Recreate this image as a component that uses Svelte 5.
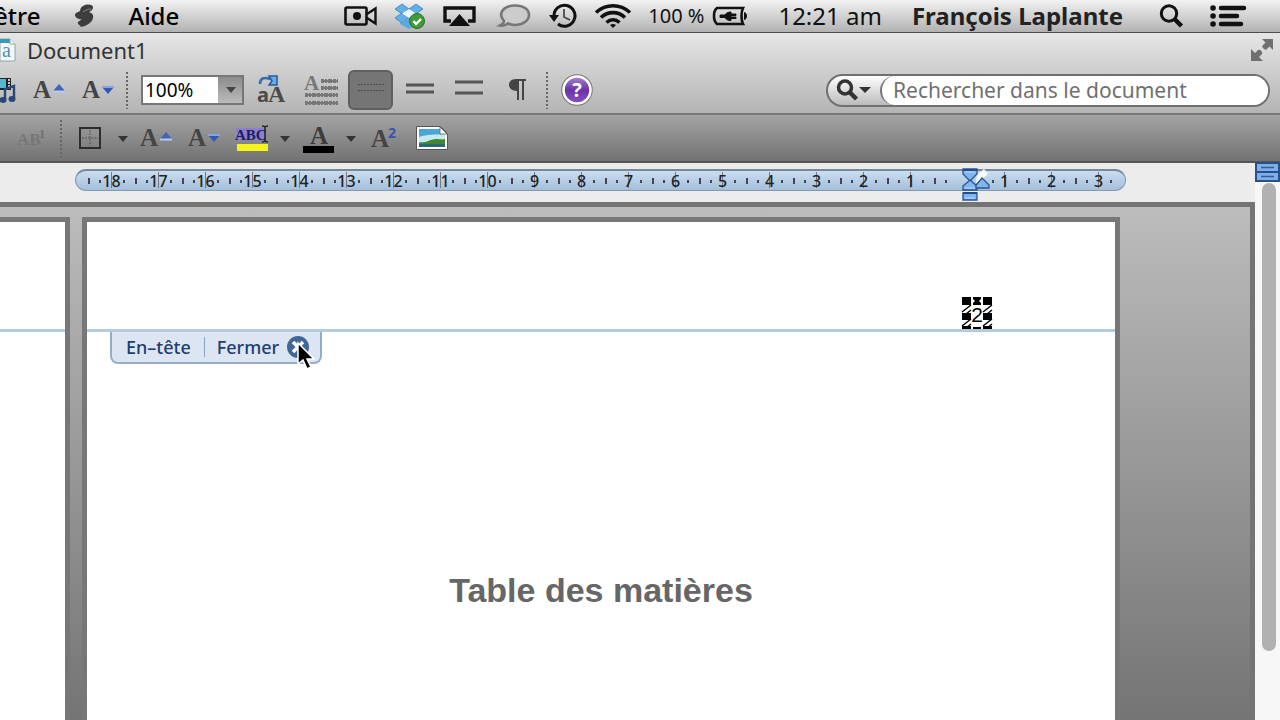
<script lang="ts">
  const marks = [18, 17, 16, 15, 14, 13, 12, 11, 10, 9, 8, 7, 6, 5, 4, 3, 2, 1, 0, 1, 2, 3];

  let zoom = $state('100%');
  let search = $state('');
  let spacing = $state(1);
  let headerOpen = $state(true);
</script>

{#snippet letterSize(grow: boolean)}
  <svg width="32" height="32" viewBox="0 -4 32 32">
    <text class="serif" x="0" y="20" font-size="25" font-weight="bold" fill="#444">A</text>
    {#if grow}
      <path d="M20 13 26 6l6 7z" fill="#4363b4" /><path d="M20 13.500h12" stroke="#b9cbed" stroke-width="2" />
    {:else}
      <path d="M20 9h12l-6 7z" fill="#3558b2" /><path d="M20 9h12" stroke="#87a5de" stroke-width="2" />
    {/if}
  </svg>
{/snippet}

{#snippet caret()}
  <svg width="10" height="7" viewBox="0 0 10 7"><path d="M0 1h10L5 7z" fill="#333" /></svg>
{/snippet}

<div class="screen">
  <header class="menubar">
    <nav>
      <a class="cut" href="#fenetre">être</a>
      <button class="script" aria-label="Scripts">
        <svg width="20" height="24" viewBox="0 0 20 24">
          <path d="M11 1c4-1 8 0 8 2 0 3-2 4-4 5 3 1 5 3 4 6-1 5-7 8-12 9-1-2-4-3-3-5 1-1 3-2 4-3-4 1-7-2-7-4 0-2 3-3 5-4 0-3 2-5 5-6z" fill="#3d3d3d" />
          <path d="M9 8c3-2 5-3 8-3" stroke="#888" fill="none" />
        </svg>
      </button>
      <a href="#aide">Aide</a>
    </nav>
    <div class="status">
      <svg width="33" height="22" viewBox="0 0 33 22">
        <rect x="1.500" y="2.500" width="21" height="17" rx="1.500" fill="none" stroke="#111" stroke-width="2.600" />
        <circle cx="13" cy="11" r="4" fill="#111" />
        <path d="M23 9 31.500 3.500v15L23 13" fill="none" stroke="#111" stroke-width="2.400" />
      </svg>
      <svg width="30" height="26" viewBox="0 0 30 26">
        <path d="M7 1 14 6 7 11 0 6zM21 1l7 5-7 5-7-5zM7 10l7 5-7 5-7-5zM21 10l7 5-7 5-7-5z" fill="#62b0e8" stroke="#2c76b4" stroke-width=".7" />
        <path d="M14 6 21 10.500 14 15 7 10.500z" fill="#eaf4fc" />
        <path d="M5 19v2l9 5 7-4-7-6-7 4z" fill="#5ba9e1" />
        <circle cx="22" cy="18" r="7.500" fill="#3e9c38" stroke="#26722a" />
        <path d="m18.500 18 2.500 3 5-5" fill="none" stroke="#fff" stroke-width="2.200" />
      </svg>
      <svg width="36" height="22" viewBox="0 0 36 22">
        <path d="M8 16H2V3h29v13h-6" fill="none" stroke="#111" stroke-width="3.400" />
        <path d="M16.500 9 27 21H6z" fill="#111" />
      </svg>
      <svg width="34" height="24" viewBox="0 0 34 24">
        <path d="M7 17C0 9 7 1.500 18 1.500c9 0 14 4 14 9.500s-6 10-14 10c-3 0-5-.500-7-1.500-2 1.500-5 2.500-8 2 2-1 4-2 4-4.500z" fill="#ccc" stroke="#777" stroke-width="2.600" />
      </svg>
      <svg width="29" height="24" viewBox="0 0 29 24">
        <path d="M5 12A10.500 10.500 0 1 1 9 20" fill="none" stroke="#111" stroke-width="3" />
        <path d="M0 11h10l-5 7z" fill="#111" />
        <path d="M15 5v8l6 3" fill="none" stroke="#444" stroke-width="1.700" />
      </svg>
      <svg width="34" height="24" viewBox="1 0 34 24">
        <g fill="none" stroke="#111" stroke-width="3.600">
          <path d="M1 8.500C11-.5 25-.5 35 8.500" /><path d="M6 13.500c7-6.500 17-6.500 24 0" /><path d="M11.500 18.500c4-3.500 9-3.500 13 0" />
        </g>
        <path d="m18 24-3-3c2-1.500 4-1.500 6 0z" fill="#111" />
      </svg>
      <div class="battery">
        <span class="percent">100 %</span>
        <svg width="36" height="20" viewBox="0 0 36 20">
          <path d="M5 2h26c-2 4-2 12 0 16H5C1 15 1 5 5 2z" fill="none" stroke="#111" stroke-width="2.600" />
          <path d="M32 6c4 1 4 7 0 8z" fill="#111" />
          <path d="M8 9h5c1-2 3-3 6-3v2h5v1.500h-5v1.500h5v1.500h-5v2c-3 0-5-1-6-3H8z" fill="#111" stroke="#111" />
        </svg>
      </div>
      <time>12:21 am</time>
      <strong>François Laplante</strong>
      <button aria-label="Spotlight">
        <svg width="25" height="24" viewBox="0 0 25 24">
          <circle cx="10" cy="9.500" r="7.700" fill="none" stroke="#111" stroke-width="3" /><path d="m15.500 15 7 7" stroke="#111" stroke-width="4.500" />
        </svg>
      </button>
      <button aria-label="Notifications">
        <svg width="36" height="22" viewBox="0 0 36 22">
          <path d="M11 3h23M11 11h16M11 19h20" stroke="#111" stroke-width="4.500" stroke-linecap="round" />
          <path d="M3 3h.1M3 11h.1M3 19h.1" stroke="#111" stroke-width="5.500" stroke-linecap="round" />
        </svg>
      </button>
    </div>
  </header>

  <section class="window-top">
    <div class="titlebar">
      <svg width="16" height="24" viewBox="0 0 16 24">
        <path d="M0 1h10l5 5v17H0z" fill="#f4f8fa" stroke="#8fa4ac" />
        <path d="M0 1h10l2 4H0z" fill="#3a9ab4" />
        <path d="M10 1v5h5" fill="#fff" stroke="#8fa4ac" />
        <text class="serif" x="2" y="19" font-size="20" fill="#4b93b4">a</text>
      </svg>
      <h1>Document1</h1>
      <button class="fullscreen" aria-label="Plein écran">
        <svg width="24" height="24" viewBox="0 0 24 24">
          <path d="M12 1h11v11l-3.500-3.500-3 3c-2 1-5-2-4-4l3-3z" fill="#707070" /><path d="M1 11v12h12l-4-4 3-3c1-2-2-5-4-4l-3 3z" fill="#707070" />
        </svg>
      </button>
    </div>

    <div class="toolbar">
      <button class="media" aria-label="Médias">
        <svg width="16" height="28" viewBox="0 0 16 28">
          <path d="M0 2h11v12H0z" fill="#222" /><path d="M0 3h6v9H0z" fill="#57b7d3" />
          <path d="M8 4h2M8 7h2M8 10h2" stroke="#fff" stroke-width="1.500" />
          <path d="M5 24V13l9-3v13" fill="none" stroke="#294777" stroke-width="2.400" />
          <ellipse cx="3" cy="24" rx="3.500" ry="3" fill="#294777" /><ellipse cx="12" cy="23" rx="3.500" ry="3" fill="#294777" />
        </svg>
      </button>
      <button aria-label="Agrandir la police">{@render letterSize(true)}</button>
      <button aria-label="Réduire la police">{@render letterSize(false)}</button>
      <i class="sep"></i>
      <span class="zoom">
        <select aria-label="Zoom" bind:value={zoom}>
          <option>100%</option>
          <option>150%</option>
          <option>200%</option>
        </select>
      </span>
      <button aria-label="Changer la casse">
        <svg width="29" height="34" viewBox="1 -2 29 34">
          <path d="M3 9C3 3 7 2 13 4" fill="none" stroke="#356fb1" stroke-width="2.600" /><path d="M12 1h8v9h-8l3-4z" fill="#6aaee6" stroke="#245a9b" stroke-width="1.500" />
          <text class="sans" x="0" y="27" font-size="20" font-weight="bold" fill="#4a4a4a">a</text>
          <text class="serif" x="11" y="27" font-size="24" font-weight="bold" fill="#4a4a4a">A</text>
        </svg>
      </button>
      <button aria-label="Styles de texte">
        <svg width="36" height="36" viewBox="0 -4 36 36">
          <text class="serif" x="0" y="14" font-size="21" font-weight="bold" fill="#777">A</text>
          <path d="M17 5h17M17 12h17M1 19h33M1 27h33" stroke="#777" stroke-width="4" stroke-dasharray="3 1 2 1 4 1" />
          <path d="M17 5h17M17 12h17M1 19h33M1 27h33" stroke="#777" stroke-width="2" />
        </svg>
      </button>
      {#each [[13, 19], [14, 21], [11, 22]] as [top, bottom], i}
        <button class="spacing" class:active={spacing === i + 1} aria-label="Interligne {i + 1}" onclick={() => (spacing = i + 1)}>
          <svg width="28" height="38" viewBox="0 0 28 38">
            {#if i === 0}
              <path d="M1 {top}.5h26M1 {bottom}.5h26" stroke="#4d4d4d" stroke-dasharray="2 1" />
            {:else}
              <path d="M0 {top}h28M0 {bottom}h28" stroke="#555" stroke-width="3" />
            {/if}
          </svg>
        </button>
      {/each}
      <button aria-label="Afficher les marques">
        <svg width="18" height="24" viewBox="0 0 18 24">
          <path d="M17 1H7C2 1 0 4 0 7s3 6 8 6v9h2V3h3v19h2V3h2z" fill="#444" />
        </svg>
      </button>
      <i class="sep"></i>
      <button aria-label="Aide">
        <svg width="32" height="32" viewBox="0 0 32 32">
          <defs>
            <linearGradient id="violet" x2="0" y2="1"><stop stop-color="#ad88d6" /><stop offset=".5" stop-color="#6b31a6" /><stop offset="1" stop-color="#8c52c8" /></linearGradient>
          </defs>
          <circle cx="16" cy="16" r="14" fill="url(#violet)" stroke="#777" stroke-width="3.500" /><circle cx="16" cy="16" r="13.500" fill="none" stroke="#fff" stroke-width="2.500" />
          <text class="sans" x="16" y="23" text-anchor="middle" font-size="20" font-weight="bold" fill="#fff">?</text>
        </svg>
      </button>
      <label class="search">
        <svg width="36" height="22" viewBox="0 0 36 22">
          <circle cx="9" cy="8.500" r="6.500" fill="none" stroke="#333" stroke-width="3.500" /><path d="m13.500 13 7 7" stroke="#333" stroke-width="4.500" />
          <path d="M23 8h12l-6 6z" fill="#333" />
        </svg>
        <input type="text" aria-label="Recherche" placeholder="Rechercher dans le document" bind:value={search} />
      </label>
    </div>
  </section>

  <section class="formatbar">
    <button class="first" aria-label="Note">
      <svg width="30" height="24" viewBox="0 -2 30 24">
        <text class="serif" x="0" y="17" font-size="17" font-weight="bold" fill="#777">AB</text><text class="serif" x="22" y="10" font-size="12" font-weight="bold" fill="#707070">1</text>
      </svg>
    </button>
    <i class="sep"></i>
    <button aria-label="Bordures">
      <svg width="22" height="22" viewBox="0 0 22 22">
        <rect x="1" y="1" width="20" height="20" fill="none" stroke="#2d2d2d" stroke-width="2" />
        <path d="M11 3v16M3 11h16" stroke="#555" stroke-dasharray="2 1" />
      </svg>
    </button>
    <button class="drop" aria-label="Options de bordure">{@render caret()}</button>
    <button aria-label="Police plus grande">{@render letterSize(true)}</button>
    <button aria-label="Police plus petite">{@render letterSize(false)}</button>
    <button aria-label="Surlignage">
      <svg width="34" height="28" viewBox="0 0 34 28">
        <path d="M1 4h30v12H1z" fill="#8b80d0" />
        <text class="serif" x="0" y="16" font-size="15" font-weight="bold" fill="#20205c">ABC</text>
        <path d="M27 2c2 0 3 0 3 2v12c0 2-1 2-3 2m6-16c-2 0-3 0-3 2m0 12c0 2 1 2 3 2" fill="none" stroke="#222" stroke-width="1.500" />
        <path d="M2 20h31v7H2z" fill="#f5f41c" />
      </svg>
    </button>
    <button class="drop" aria-label="Couleur du surlignage">{@render caret()}</button>
    <button aria-label="Couleur de police">
      <svg width="31" height="32" viewBox="0 -5 31 32">
        <text class="serif" x="7" y="17" font-size="25" font-weight="bold" fill="#3c3c3c">A</text><path d="M0 19h31v7H0z" fill="#000" />
      </svg>
    </button>
    <button class="drop" aria-label="Choix de couleur">{@render caret()}</button>
    <button aria-label="Exposant">
      <svg width="26" height="32" viewBox="0 -4 26 32">
        <text class="serif" x="0" y="21" font-size="25" font-weight="bold" fill="#444">A</text><text class="sans" x="17" y="12" font-size="14" font-weight="bold" fill="#3653b0">2</text>
      </svg>
    </button>
    <button aria-label="Image">
      <svg width="32" height="24" viewBox="0 0 32 24">
        <path d="M.500.500h24l7 7v16H.500z" fill="#fff" stroke="#555" />
        <path d="M3 3h21l5 6v12H3z" fill="#4ca5d8" /><path d="M3 11c8-3 17-2 26-3v8H3z" fill="#c6e9ef" />
        <path d="M3 17c8 0 11-4 17-4 4 0 6 1 9 0v5H3z" fill="#428534" /><path d="M3 18h26v3H3z" fill="#296b74" />
        <path d="M24 1v7h7z" fill="#fff" stroke="#777" />
      </svg>
    </button>
  </section>

  <main>
    <div class="canvas">
      <div class="ruler-row">
        <div class="ruler">
          {#each marks as mark}
            <span class:zero={mark === 0}>{mark || ''}</span>
          {/each}
          <svg class="indent" width="28" height="36" viewBox="0 0 28 36">
            <path d="m15 7 7-6 4 5-12 10z" fill="#fff" />
            <g stroke="#28558f" stroke-width="1.300" fill="#80b5f0">
              <path d="M1 1h14v5L8 13 1 6z" /><path d="m8 12 7 6v4H1v-4z" /><path d="M1 25h14v7H1z" /><path d="m20 10 7 7v3H14v-3z" />
            </g>
            <path d="M1 2h14M1 25h14" stroke="#254e88" stroke-width="2" /><path d="M3 4h10M3 20h10M3 30h10" stroke="#b9dbff" />
          </svg>
        </div>
      </div>

      <div class="workspace">
        <article class="page previous"><div class="page-header"></div></article>
        <article class="page current">
          <div class="page-header">
            <svg class="field" width="30" height="32" viewBox="0 0 30 32">
              <path d="M0 15 9 8M4 17l5-4M21 15l9-7M25 17l5-4M0 29l9-7M4 31l5-4M21 29l9-7M25 31l5-4" stroke="#000" stroke-width="1.500" />
              <path d="M0 0h9v8H0zM11 0h8v2l-2 2 2 2v2h-8V6l2-2-2-2zM21 0h9v8h-9zM0 16h9v7H0zM21 16h9v7h-9zM0 29h9v3H0zM11 30h8v2h-8zM21 29h9v3h-9z" />
              <text class="arial" x="15" y="25" text-anchor="middle" font-size="21">2</text>
            </svg>
          </div>
          {#if headerOpen}
            <div class="header-tab">
              <span>En–tête</span>
              <button onclick={() => (headerOpen = false)}>
                Fermer
                <svg width="22" height="22" viewBox="0 0 22 22">
                  <circle cx="11" cy="11" r="11" fill="#416798" /><path d="m6 6 10 10M16 6 6 16" stroke="#fff" stroke-width="3.500" />
                </svg>
              </button>
              <svg class="pointer" width="18" height="28" viewBox="0 0 18 28">
                <path d="M1 1v21l5-4 4 9 4-2-4-8h7z" fill="#000" stroke="#fff" stroke-width="1.500" />
              </svg>
            </div>
          {/if}
          <h2>Table des matières</h2>
        </article>
      </div>
    </div>
    <aside class="scrollbar">
      <svg width="25" height="19" viewBox="0 0 25 19">
        <path d="M1 0h23v18H1z" fill="#7faee8" stroke="#264f8c" stroke-width="2" /><path d="M2 9h21" stroke="#264f8c" stroke-width="2" />
        <path d="M6 4.500h13M6 13.500h13" stroke="#315e9c" stroke-width="1.500" />
      </svg>
      <div class="thumb"></div>
    </aside>
  </main>
</div>

<style>
  :global(body) { margin: 0; overflow: hidden; }
  .screen { height: 100vh; display: flex; flex-direction: column; overflow: hidden; font-family: "Noto Sans", sans-serif; color: #111; }
  .screen * { box-sizing: border-box; }
  svg { display: block; flex: none; overflow: visible; }
  button { border: 0; padding: 0; background: none; font: inherit; color: inherit; }
  .serif { font-family: "Liberation Serif", serif; }
  .sans { font-family: "Noto Sans", sans-serif; }
  .arial { font-family: "Liberation Sans", sans-serif; }

  .menubar { flex: none; height: 33px; display: flex; justify-content: space-between; align-items: center; padding-right: 34px; border-bottom: 1px solid #4c4c4c; background: linear-gradient(#f2f2f2, #b2b2b2); font-size: 24px; line-height: 32px; white-space: nowrap; }
  nav, .status, .battery { display: flex; align-items: center; }
  nav { gap: 34px; font-weight: 500; }
  nav a { color: #000; text-decoration: none; }
  .cut { margin-left: -6px; }
  .status { gap: 18px; }
  .battery { gap: 8px; }
  .percent { font-size: 20px; }
  time { margin: 0 12px; }
  strong { margin-right: 18px; color: #222; }
  .status button + button { margin-left: 8px; }

  .window-top { flex: none; height: 82px; border-bottom: 2px solid #777; background: linear-gradient(#e6e6e6, #b4b4b4); }
  .titlebar { height: 34px; display: flex; align-items: center; gap: 11px; padding-right: 6px; }
  h1 { margin: 0; font-size: 22px; line-height: 34px; font-weight: 400; color: #333; }
  .fullscreen { margin-left: auto; }
  .toolbar { height: 46px; display: flex; align-items: center; padding-right: 10px; }
  .toolbar button { width: 49px; height: 40px; flex: none; display: flex; align-items: center; justify-content: center; }
  .toolbar .media { width: 24px; justify-content: flex-start; }
  .toolbar .spacing.active { width: 45px; margin: 0 2px; border: 2px solid #5f5f5f; border-radius: 6px; background: #757575; }
  .sep { flex: none; width: 10px; height: 38px; background: radial-gradient(circle, #666 1px, transparent 1px) center top / 4px 4px repeat-y; }
  .zoom { position: relative; flex: none; margin: 0 4px 0 9px; }
  .zoom::after { content: ''; position: absolute; right: 8px; top: 12px; border: 5px solid transparent; border-top: 6px solid #444; border-bottom: 0; pointer-events: none; }
  select { display: block; width: 103px; height: 30px; padding: 0 2px; border: 2px solid #777; border-radius: 0; appearance: none; background: linear-gradient(#8c8c8c, #bbb) right / 24px 100% no-repeat, #fff; font: 19px/26px "Noto Sans", sans-serif; color: #000; }
  .search { width: 444px; height: 33px; margin-left: auto; display: flex; align-items: center; padding-left: 8px; border: 2px solid #707070; border-radius: 17px; background: linear-gradient(#fff, #bbb); }
  .search input { flex: 1; min-width: 0; height: 29px; margin-left: 8px; padding: 0 11px; border: 0; border-left: 2px solid #777; border-radius: 15px; background: #fff; font: 21px/28px "Noto Sans", sans-serif; }
  .search input::placeholder { color: #707070; opacity: 1; }

  .formatbar { flex: none; height: 48px; display: flex; align-items: center; padding-left: 8px; border-bottom: 2px solid #555; background: linear-gradient(#a4a4a4, #727272); }
  .formatbar button { width: 48px; height: 40px; flex: none; display: flex; align-items: center; justify-content: center; }
  .formatbar .drop { width: 18px; }

  main { flex: 1; min-height: 0; display: flex; }
  .canvas { flex: 1; min-width: 0; display: flex; flex-direction: column; }
  .ruler-row { flex: none; height: 39px; padding: 6px 0 0 75px; background: #ececec; }
  .ruler { position: relative; width: 1051px; height: 22px; display: flex; padding-left: 12px; border: 1px solid #8299b3; border-top: 2px solid #77889b; border-radius: 11px; background: linear-gradient(#c9def0, #a5bfdb); }
  .ruler span { width: 47px; flex: none; text-align: center; font-size: 16px; line-height: 20px; font-weight: 500; color: #222; background: linear-gradient(#445, #445) 0 7px / 2px 6px no-repeat, linear-gradient(#445, #445) 11px 9px / 2px 3px no-repeat, linear-gradient(#445, #445) 35px 9px / 2px 3px no-repeat, linear-gradient(#778, #778) 23px 1px / 1px 16px no-repeat; }
  .ruler .zero { background: linear-gradient(#445, #445) 0 7px / 2px 6px no-repeat, linear-gradient(#445, #445) 11px 9px / 2px 3px no-repeat; }
  .indent { position: absolute; left: 886px; top: -3px; }
  .workspace { flex: 1; min-height: 0; display: flex; gap: 12px; padding: 10px 130px 0 0; border-top: 5px solid #747474; border-right: 5px solid #747474; background: linear-gradient(#bcbcbc, #747474); overflow: hidden; }
  .page { border: 5px solid #777; border-bottom: 0; background: #fff; }
  .previous { width: 70px; flex: none; border-left: 0; }
  .current { flex: 1; }
  .page-header { height: 110px; display: flex; justify-content: flex-end; align-items: flex-end; border-bottom: 3px solid #b3cbe0; }
  .current .page-header { padding-right: 123px; }
  .header-tab { position: relative; width: 212px; height: 32px; margin-left: 23px; display: flex; align-items: center; padding-left: 14px; border: 2px solid #96acc8; border-top: 0; border-radius: 0 0 8px 8px; background: #dbe6f2; font-size: 18px; line-height: 20px; font-weight: 500; color: #233d70; }
  .header-tab span { padding-right: 13px; border-right: 1px solid #8fa3c0; }
  .header-tab button { display: flex; align-items: center; gap: 8px; padding-left: 12px; }
  .pointer { position: absolute; left: 185px; top: 10px; }
  h2 { margin: 206px 0 0; text-align: center; font: bold 34px/40px "Liberation Sans", sans-serif; color: #666; }
  .scrollbar { flex: none; width: 25px; background: #f7f7f7; }
  .thumb { width: 14px; height: 84%; margin: 1px 0 0 7px; border-radius: 7px; background: #b1b1b1; }
</style>
